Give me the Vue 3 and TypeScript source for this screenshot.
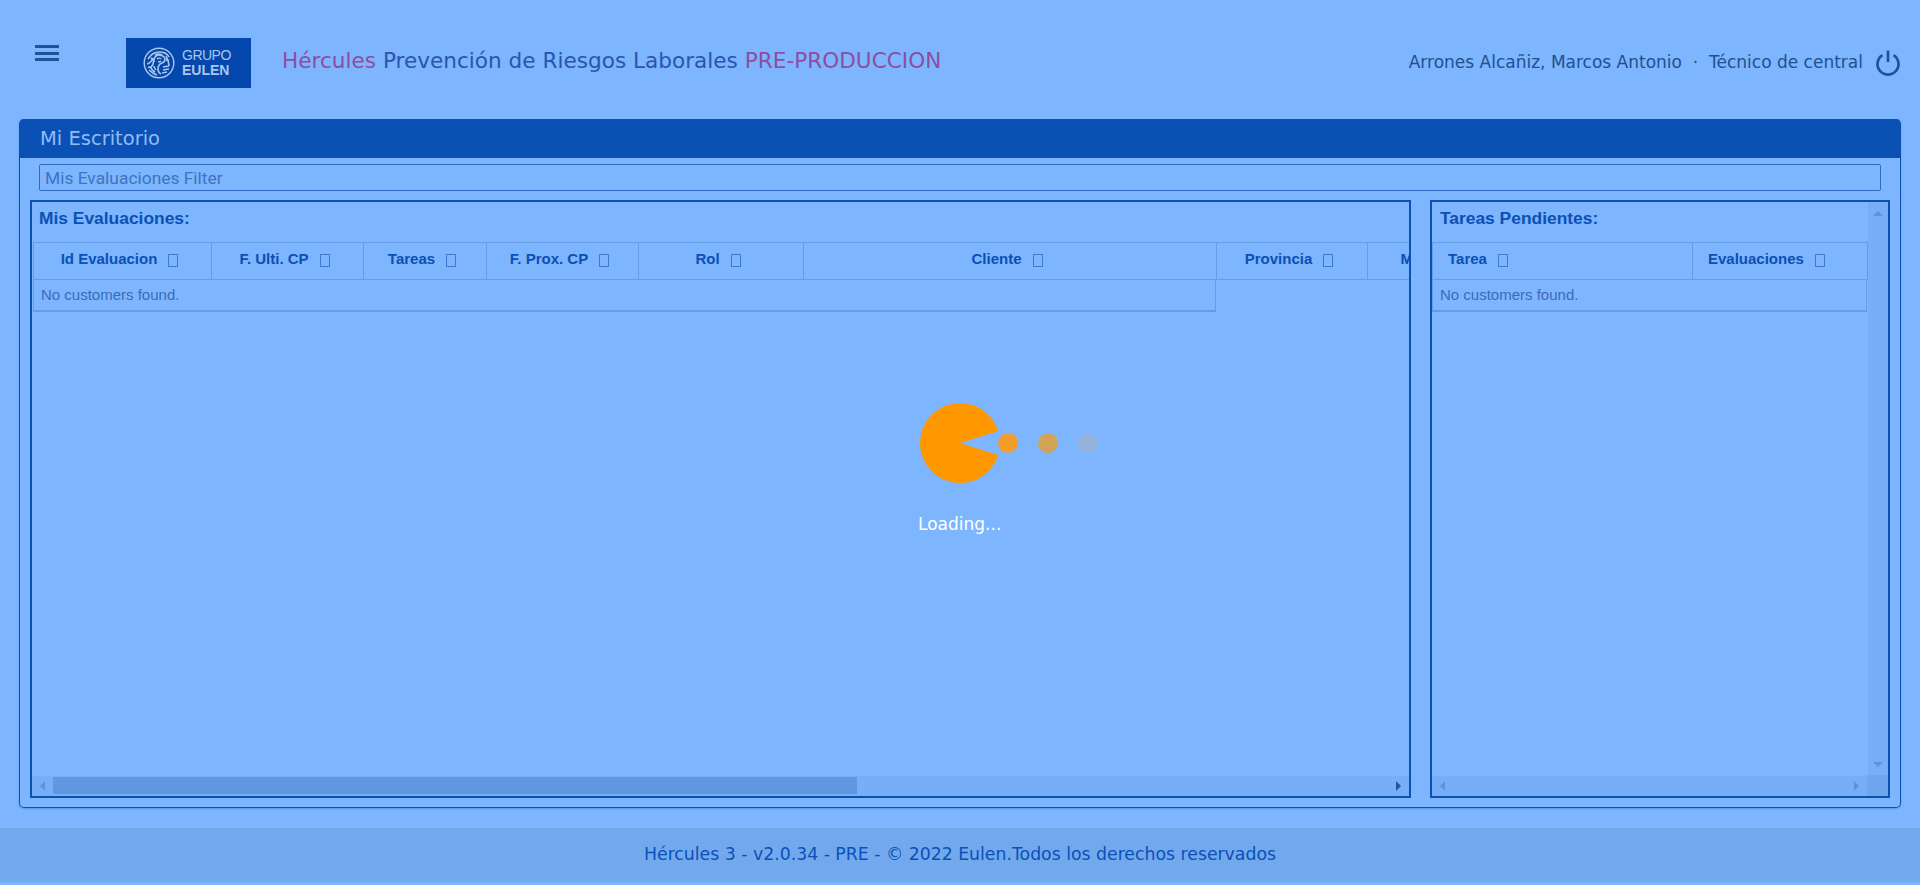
<template>
  <div class="page">
    <header class="topbar">
      <button class="menu-btn" type="button" aria-label="Menu">
        <span></span><span></span><span></span>
      </button>
      <div class="logo">
        <svg class="logo-mark" viewBox="0 0 32 32" aria-hidden="true">
          <circle cx="16" cy="16" r="14.8" fill="none" stroke="#a9c6ec" stroke-width="1.4" />
          <g fill="none" stroke="#a9c6ec" stroke-width="1.6">
            <path d="M5 12c3-5 7-7 11-7s8 1 10 5" />
            <path d="M4 17c3-1 5-3 6-6M5 20c2 1 4 0 5-3s0-6 3-8 6-1 8 1 1 5-2 6-4 3-4 6 1 4 3 5" />
            <path d="M8 11c2 1 3 2 3 4M14 12c1-1 3-1 4 0M15 15c1 0 2 0 3-1M12 8c2-1 5-1 7 0" />
            <path d="M23 9c2 3 3 6 3 10M20 20l6-1M20 23l6-1M19 26l5-1M23 13l3 1" />
            <path d="M6 23c2 2 5 4 8 5M8 20c0 2 2 4 4 5M11 19c0 2 1 3 2 4" />
          </g>
        </svg>
        <div class="logo-text">
          <span class="logo-top">GRUPO</span>
          <span class="logo-bottom">EULEN</span>
        </div>
      </div>
      <div class="app-title">
        <span class="accent">Hércules</span> Prevención de Riesgos Laborales
        <span class="accent">PRE-PRODUCCION</span>
      </div>
      <div class="user">Arrones Alcañiz, Marcos Antonio &nbsp;·&nbsp; Técnico de central</div>
      <svg class="power" viewBox="0 0 26 26" aria-label="Salir">
        <path d="M7.5 5.1A10.5 10.5 0 1 0 18.5 5.1M13 0.5V12" fill="none" stroke="#1f5596" stroke-width="2.7" />
      </svg>
    </header>

    <section class="panel">
      <div class="panel-head">Mi Escritorio</div>
      <div class="filter-row">
        <input class="filter" type="text" placeholder="Mis Evaluaciones Filter" />
      </div>
      <div class="panel-body">
        <div class="box box-left">
          <div class="box-main">
            <h3 class="box-title">Mis Evaluaciones:</h3>
            <div class="thead">
              <div
                v-for="col in evalColumns"
                :key="col.label"
                class="th"
                :style="{ width: col.width + 'px' }"
              >
                {{ col.label }}<i class="tofu"></i>
              </div>
            </div>
            <div class="empty-row" style="width: 1183px">No customers found.</div>
          </div>
          <div class="hscroll">
            <span class="arrow arrow-left"></span>
            <span class="thumb"></span>
            <span class="arrow arrow-right dark"></span>
          </div>
        </div>

        <div class="box box-right">
          <div class="box-upper">
            <div class="box-main">
              <h3 class="box-title">Tareas Pendientes:</h3>
              <div class="thead">
                <div
                  v-for="col in taskColumns"
                  :key="col.label"
                  class="th th-start"
                  :style="{ width: col.width + 'px' }"
                >
                  {{ col.label }}<i class="tofu"></i>
                </div>
              </div>
              <div class="empty-row">No customers found.</div>
            </div>
            <div class="vscroll">
              <span class="arrow arrow-up"></span>
              <span class="arrow arrow-down"></span>
            </div>
          </div>
          <div class="hscroll hscroll-right">
            <span class="arrow arrow-left"></span>
            <span class="arrow arrow-right"></span>
            <span class="corner"></span>
          </div>
        </div>
      </div>
    </section>

    <footer class="footer">Hércules 3 - v2.0.34 - PRE - © 2022 Eulen.Todos los derechos reservados</footer>
    <div class="footer-gap"></div>

    <div class="loader">
      <div class="loader-row">
        <svg class="pacman" viewBox="0 0 80 80" aria-hidden="true">
          <path d="M40 40 L78.2 28.1 A40 40 0 1 0 78.2 51.9 Z" fill="#ff9800" />
        </svg>
        <span class="dot dot-1"></span>
        <span class="dot dot-2"></span>
        <span class="dot dot-3"></span>
      </div>
      <div class="loader-text">Loading...</div>
    </div>
  </div>
</template>

<script setup lang="ts">
type Column = {
  label: string;
  width: number;
};

const evalColumns: Column[] = [
  { label: "Id Evaluacion", width: 178 },
  { label: "F. Ulti. CP", width: 152 },
  { label: "Tareas", width: 123 },
  { label: "F. Prox. CP", width: 152 },
  { label: "Rol", width: 165 },
  { label: "Cliente", width: 413 },
  { label: "Provincia", width: 151 },
  { label: "Municipio", width: 163 },
];

const taskColumns: Column[] = [
  { label: "Tarea", width: 260 },
  { label: "Evaluaciones", width: 175 },
];
</script>

<style>
html,
body {
  margin: 0;
  background: #7db5ff;
}
</style>

<style scoped>
.page {
  position: relative;
  height: 885px;
  display: flex;
  flex-direction: column;
  overflow: hidden;
  background: #7db5ff;
  font-family: "Liberation Sans", Arial, sans-serif;
}

.topbar {
  height: 119px;
  flex: none;
  display: flex;
  align-items: flex-start;
  box-sizing: border-box;
  padding: 38px 19px 0 35px;
}

.menu-btn {
  width: 24px;
  height: 16px;
  margin-top: 7px;
  padding: 0;
  border: 0;
  background: none;
  display: flex;
  flex-direction: column;
  justify-content: space-between;
}

.menu-btn span {
  display: block;
  height: 3px;
  background: #1f5596;
}

.logo {
  width: 125px;
  height: 50px;
  margin-left: 67px;
  display: flex;
  align-items: center;
  gap: 7px;
  box-sizing: border-box;
  padding-left: 17px;
  background: #0447ad;
  color: #a9c6ec;
}

.logo-mark {
  width: 32px;
  height: 32px;
  flex: none;
}

.logo-text {
  display: flex;
  flex-direction: column;
  line-height: 15px;
  font-size: 14px;
}

.logo-top {
  letter-spacing: -0.5px;
}

.logo-bottom {
  font-weight: 700;
}

.app-title {
  margin-left: 31px;
  line-height: 46px;
  font-family: "DejaVu Sans", sans-serif;
  font-size: 21.6px;
  color: #2a55ad;
  white-space: nowrap;
}

.accent {
  color: #8e4ea0;
}

.user {
  margin-left: auto;
  line-height: 48px;
  font-family: "DejaVu Sans", sans-serif;
  font-size: 17px;
  color: #21508f;
  white-space: nowrap;
}

.power {
  width: 26px;
  height: 26px;
  margin: 12px 0 0 12px;
}

.panel {
  flex: 1;
  min-height: 0;
  margin: 0 19px 20px 19px;
  display: flex;
  flex-direction: column;
  border: 1px solid #0b50b4;
  border-top: 0;
  border-radius: 5px;
  box-shadow: 0 1px 2px rgba(11, 80, 180, 0.3);
}

.panel-head {
  height: 39px;
  flex: none;
  box-sizing: border-box;
  padding-left: 20px;
  line-height: 39px;
  font-family: "DejaVu Sans", sans-serif;
  font-size: 19.5px;
  color: #8fbcf8;
  background: #0b50b4;
  border-radius: 4px 4px 0 0;
}

.filter-row {
  flex: none;
  padding: 6px 19px 9px 19px;
}

.filter {
  display: block;
  width: 100%;
  height: 27px;
  box-sizing: border-box;
  padding: 0 5px;
  border: 1px solid #2f6bc2;
  border-radius: 2px;
  background: transparent;
  font-family: Roboto, sans-serif;
  font-size: 17.4px;
  outline: none;
}

.filter::placeholder {
  color: #3f73bf;
  opacity: 1;
}

.panel-body {
  flex: 1;
  min-height: 0;
  display: flex;
  gap: 19px;
  padding: 0 10px 9px 10px;
}

.box {
  min-width: 0;
  display: flex;
  flex-direction: column;
  box-sizing: border-box;
  border: 2px solid #0b50b4;
}

.box-left {
  width: 1381px;
  flex: none;
}

.box-right {
  flex: 1;
}

.box-main {
  flex: 1;
  min-width: 0;
  min-height: 0;
  overflow: hidden;
}

.box-upper {
  flex: 1;
  min-height: 0;
  display: flex;
}

.box-title {
  height: 40px;
  margin: 0;
  box-sizing: border-box;
  padding: 6px 0 0 7px;
  font-size: 17.4px;
  line-height: 20px;
  font-weight: 700;
  color: #0b50b4;
}

.box-right .box-title {
  padding-left: 8px;
}

.thead {
  display: flex;
  height: 38px;
  margin-left: 1px;
  box-sizing: border-box;
  border-top: 1px solid #669ce4;
  border-bottom: 1px solid #669ce4;
}

.box-right .thead,
.box-right .empty-row {
  margin-left: 0;
}

.box-right .thead {
  border-right: 1px solid #669ce4;
}

.th {
  flex: none;
  display: flex;
  align-items: center;
  justify-content: center;
  box-sizing: border-box;
  padding: 0 6px 5px 0;
  border-left: 1px solid #669ce4;
  font-size: 15px;
  font-weight: 700;
  color: #0b50b4;
  white-space: nowrap;
}

.th-start {
  justify-content: flex-start;
  padding-left: 15px;
}

.tofu {
  display: block;
  width: 8px;
  height: 11px;
  margin: 4px 0 0 11px;
  border: 1px solid #3f78cc;
}

.empty-row {
  height: 32px;
  margin-left: 1px;
  box-sizing: border-box;
  padding-left: 7px;
  line-height: 30px;
  border-left: 1px solid #669ce4;
  border-right: 1px solid #669ce4;
  border-bottom: 2px solid #669ce4;
  font-size: 15px;
  color: #3a6cb4;
}

.box-right .empty-row {
  width: 435px;
}

.hscroll {
  position: relative;
  height: 20px;
  flex: none;
  display: flex;
  align-items: center;
  justify-content: space-between;
  padding: 0 8px;
  background: #76aef7;
}

.thumb {
  position: absolute;
  left: 21px;
  top: 1px;
  width: 804px;
  height: 17px;
  background: #5f98df;
}

.vscroll {
  width: 20px;
  flex: none;
  display: flex;
  flex-direction: column;
  align-items: center;
  justify-content: space-between;
  padding: 9px 0;
  box-sizing: border-box;
  background: #76aef7;
}

.hscroll-right {
  padding-right: 29px;
}

.corner {
  position: absolute;
  right: 0;
  top: -1px;
  width: 21px;
  height: 21px;
  background: #6ea5ec;
}

.arrow {
  display: block;
  width: 0;
  height: 0;
  border-style: solid;
  border-color: transparent;
}

.arrow-left {
  border-width: 5px 5px 5px 0;
  border-right-color: #5b93dc;
}

.arrow-right {
  border-width: 5px 0 5px 5px;
  border-left-color: #5b93dc;
}

.arrow-right.dark {
  border-left-color: #23589f;
}

.arrow-up {
  border-width: 0 5px 5px;
  border-bottom-color: #5b93dc;
}

.arrow-down {
  border-width: 5px 5px 0;
  border-top-color: #5b93dc;
}

.footer {
  height: 54px;
  flex: none;
  line-height: 52px;
  text-align: center;
  font-family: "DejaVu Sans", sans-serif;
  font-size: 17.3px;
  color: #0b50b8;
  background: #72a9ed;
}

.footer-gap {
  height: 3px;
  flex: none;
}

.loader {
  position: absolute;
  left: 920px;
  top: 403px;
}

.loader-row {
  position: relative;
  width: 80px;
  height: 80px;
}

.pacman {
  display: block;
  width: 80px;
  height: 80px;
}

.dot {
  position: absolute;
  top: 30px;
  width: 20px;
  height: 20px;
  border-radius: 50%;
}

.dot-1 {
  left: 78px;
  background: #f09d2b;
}

.dot-2 {
  left: 118px;
  background: #d2a356;
}

.dot-3 {
  left: 158px;
  background: #94b2dc;
}

.loader-text {
  width: 84px;
  margin: 29px 0 0 -2px;
  font-family: "DejaVu Sans", sans-serif;
  font-size: 17px;
  line-height: 24px;
  color: #fff;
  white-space: nowrap;
}
</style>
